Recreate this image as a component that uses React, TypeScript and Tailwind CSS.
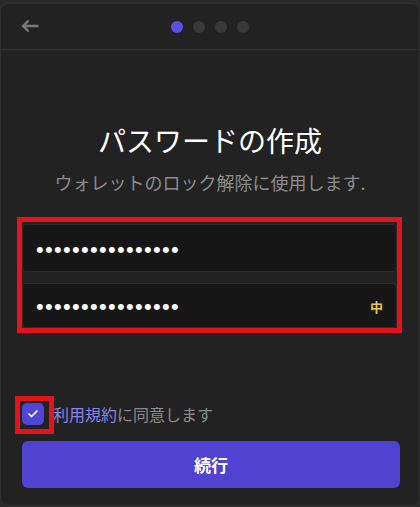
import { useState } from 'react';
import { Check } from 'lucide-react';

const font = { fontFamily: '"Noto Sans CJK JP", "Noto Sans", sans-serif' };

function PasswordField({ value, strength }: { value: string; strength?: string }) {
  return (
    <div className="flex h-full items-center justify-between rounded-[4px] border border-[#2c2c2c] bg-[#171717] pl-[13px] pr-[13px]">
      <span className="pt-[3px] text-[22px] leading-none tracking-[1.3px] text-white" style={{ fontFamily: '"Liberation Sans", sans-serif' }}>
        {'•'.repeat(value.length)}
      </span>
      {strength && <span className="pt-[3px] text-[13px] font-bold text-[#e9c44c]">{strength}</span>}
    </div>
  );
}

export default function App() {
  const [agreed, setAgreed] = useState(true);
  const [step] = useState(0);

  return (
    <div className="h-[507px] w-[420px] bg-[#2a2a2a] pt-[3px] pb-[1px]" style={font}>
      <div className="flex h-full flex-col rounded-[8px] border border-[#313131] bg-[#222222]">
        {/* Header */}
        <div className="relative flex h-[46px] items-center border-b border-[#333333] px-[20px]">
          <button className="-mt-[2px] flex h-[12px] w-[18px] items-center justify-center">
            <svg width="18" height="12" viewBox="0 0 18 12" fill="none" stroke="#7a7a7a" strokeWidth="2.4" strokeLinecap="round" strokeLinejoin="round">
              <path d="M2 6h14.5M6.8 1.3 2 6l4.8 4.7" />
            </svg>
          </button>
          <div className="absolute left-1/2 top-[17px] flex -translate-x-1/2 gap-[10px]">
            {[0, 1, 2, 3].map((i) => (
              <span key={i} className={`h-[12px] w-[12px] rounded-full ${i === step ? 'bg-[#5b4fe2]' : 'bg-[#393939]'}`} />
            ))}
          </div>
        </div>

        {/* Body */}
        <div className="flex flex-1 flex-col px-[20px]">
          <h1 className="mt-[72px] text-center text-[28px] leading-[36px] font-normal text-white">パスワードの作成</h1>
          <p className="mt-[11px] text-center text-[18px] leading-[26px] text-[#8c8c8c]">ウォレットのロック解除に使用します.</p>

          <div className="mt-[22px] -ml-[4px] flex w-[385px] flex-col border-[5px] border-[#e3131d] pt-[2px]">
            <div className="h-[48px]">
              <PasswordField value="abcdefghijklmnop" />
            </div>
            <div className="h-[11px]" />
            <div className="h-[45px]">
              <PasswordField value="abcdefghijklmnop" strength="中" />
            </div>
          </div>

          <label className="mt-[70px] flex items-center gap-[9px] pl-[1px]">
            <span className="relative">
              <button
                onClick={() => setAgreed(!agreed)}
                className={`flex h-[22px] w-[22px] items-center justify-center rounded-[5px] ${agreed ? 'bg-[#5046d6]' : 'border border-[#555]'}`}
              >
                {agreed && <Check size={12} strokeWidth={3.5} className="text-white" />}
              </button>
              <span className="pointer-events-none absolute -left-[7px] -top-[7px] h-[38px] w-[39px] border-[5px] border-[#e3131d]" />
            </span>
            <span className="text-[16px] leading-[22px] text-[#8c8c8c]">
              <span className="text-[#8a82f0]">利用規約</span>に同意します
            </span>
          </label>

          <button className="mt-[16px] ml-[1px] h-[47px] w-[378px] rounded-[6px] bg-[#5142d2] text-[17px] font-bold text-white">
            続行
          </button>
        </div>
      </div>
    </div>
  );
}
